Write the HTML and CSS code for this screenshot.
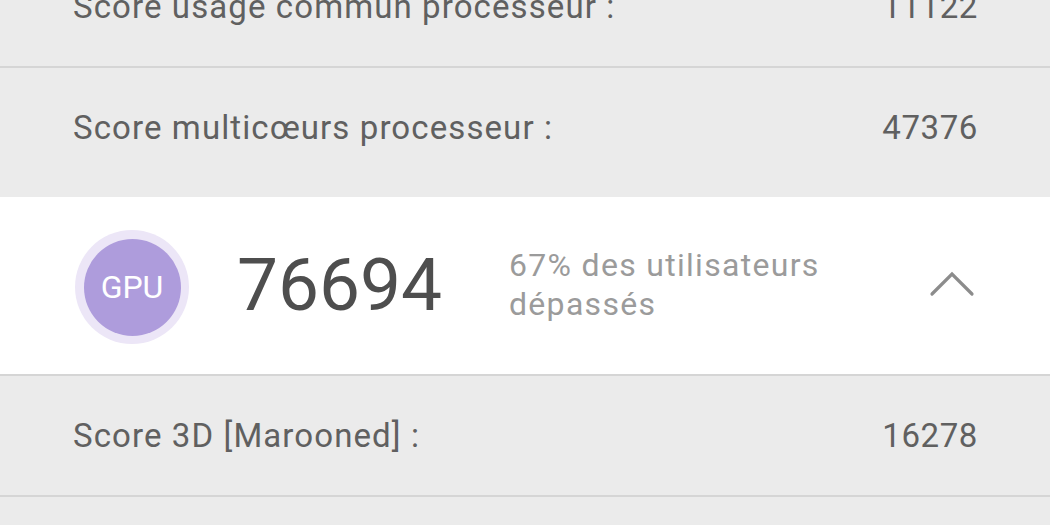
FILE: index.html
```html
<!DOCTYPE html>
<html lang="fr">
<head>
<meta charset="utf-8">
<link rel="stylesheet" href="styles.css">
</head>
<body>
<div class="screen">
  <div class="row row-first">
    <span class="label">Score usage commun processeur :</span>
    <span class="value">11122</span>
  </div>
  <div class="row row-gap">
    <span class="label">Score multicœurs processeur :</span>
    <span class="value">47376</span>
  </div>
  <div class="card">
    <div class="badge"><div class="badge-inner">GPU</div></div>
    <div class="score">76694</div>
    <div class="rank">67% des utilisateurs<br>dépassés</div>
    <svg class="chevron" width="48" height="30" viewBox="0 0 48 30">
      <polyline points="3,25 23,5 43,25" fill="none" stroke="#8c8c8c" stroke-width="3.2" stroke-linecap="round" stroke-linejoin="miter"/>
    </svg>
  </div>
  <div class="row">
    <span class="label">Score 3D [Marooned] :</span>
    <span class="value">16278</span>
  </div>
  <div class="row"></div>
</div>
</body>
</html>
```
FILE: styles.css
```css
html, body {
  margin: 0;
  padding: 0;
}
body {
  background: #ebebeb;
  font-family: Roboto, "Noto Sans", "Liberation Sans", sans-serif;
  overflow: hidden;
  width: 1050px;
  height: 525px;
}
.screen {
  display: flex;
  flex-direction: column;
}
.row {
  flex: none;
  height: 119px;
  display: flex;
  align-items: center;
  justify-content: space-between;
  padding: 0 73px 0 73px;
  background: #ebebeb;
  border-bottom: 2px solid #d5d5d5;
  font-size: 33px;
  color: #606060;
}
.row-first {
  margin-top: -53px;
}
.row-gap {
  border-bottom: none;
  height: 129px;
  padding-bottom: 10px;
  box-sizing: border-box;
}
.label, .value {
  line-height: 1;
}
.label {
  letter-spacing: 1.1px;
}
.value {
  letter-spacing: 0.6px;
  margin-right: -1px;
}
.card {
  flex: none;
  height: 177px;
  background: #ffffff;
  border-bottom: 2px solid #d5d5d5;
  display: flex;
  align-items: center;
  padding: 0 75px;
}
.badge {
  width: 114px;
  height: 114px;
  border-radius: 50%;
  background: #ece6f7;
  display: flex;
  align-items: center;
  justify-content: center;
  margin-top: 3px;
}
.badge-inner {
  width: 97px;
  height: 97px;
  border-radius: 50%;
  background: #ae9cdc;
  color: #ffffff;
  font-size: 32px;
  display: flex;
  align-items: center;
  justify-content: center;
}
.score {
  margin-left: 48px;
  font-size: 73px;
  color: #4e4e4e;
  line-height: 1;
  width: 224px;
}
.rank {
  margin-left: 48px;
  font-size: 32px;
  letter-spacing: 1.3px;
  line-height: 39px;
  color: #9b9b9b;
  flex: 1;
  margin-top: -2px;
}
.chevron {
  margin-right: -2px;
  margin-top: -4px;
}
```
